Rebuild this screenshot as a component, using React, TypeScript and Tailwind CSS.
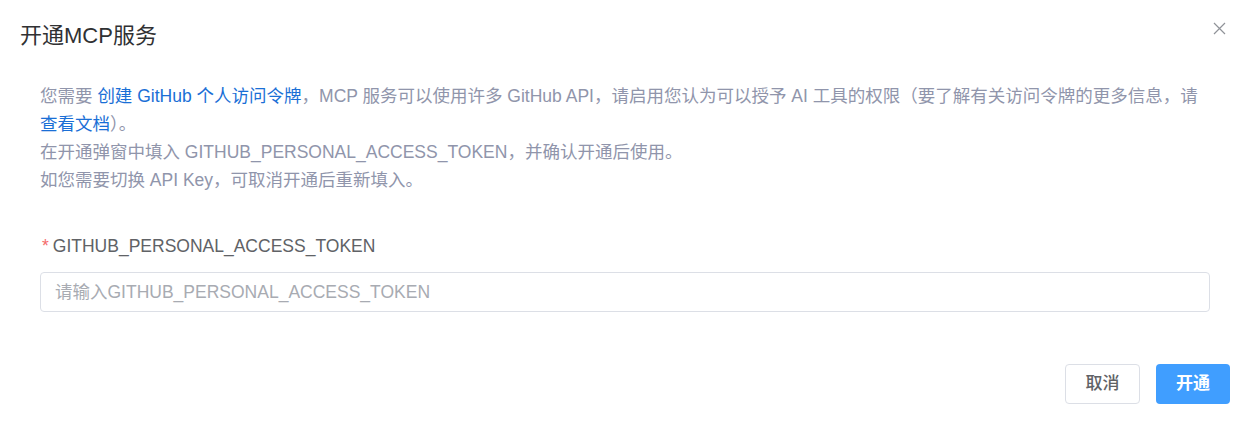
const font = { fontFamily: '"Liberation Sans", "Noto Sans CJK SC", sans-serif' };

function CloseIcon() {
  return (
    <svg width="13" height="13" viewBox="0 0 13 13" className="text-[#909399]">
      <path d="M1 1 L12 12 M12 1 L1 12" stroke="currentColor" strokeWidth="1.2" fill="none" />
    </svg>
  );
}

export default function App() {
  return (
    <div style={font} className="w-[1249px] h-[421px] bg-white rounded-md overflow-hidden flex flex-col">
      <div className="flex justify-between items-start pt-[22px] pl-5 pr-[23px]">
        <p className="text-[22px] leading-7 text-[#303133]">开通MCP服务</p>
        <button className="p-0">
          <CloseIcon />
        </button>
      </div>

      <div className="px-10 pt-8 text-[17.5px] leading-7 text-[#9095ab]">
        <p>
          您需要 <span className="text-[#1a6fd6]">创建 GitHub 个人访问令牌</span>，MCP 服务可以使用许多 GitHub API，请启用您认为可以授予 AI 工具的权限（要了解有关访问令牌的更多信息，请
          <span className="text-[#1a6fd6]">查看文档</span>）。
        </p>
        <p>在开通弹窗中填入 GITHUB_PERSONAL_ACCESS_TOKEN，并确认开通后使用。</p>
        <p>如您需要切换 API Key，可取消开通后重新填入。</p>
      </div>

      <div className="pl-10 pr-[39px] pt-[38px]">
        <p className="text-[17.5px] leading-7 text-[#606266]">
          <span className="text-[#f56c6c] pl-[2px] pr-[4px]">*</span>GITHUB_PERSONAL_ACCESS_TOKEN
        </p>
        <div className="mt-3 h-10 border border-[#dcdfe6] rounded flex items-center px-[14px]">
          <span className="text-[17.5px] text-[#a8abb2]">请输入GITHUB_PERSONAL_ACCESS_TOKEN</span>
        </div>
      </div>

      <div className="flex justify-end gap-4 pl-5 pr-[19px] pt-[52px]">
        <button className="h-10 w-[75px] border border-[#dcdfe6] rounded text-[17px] text-[#606266] font-medium bg-white">
          取消
        </button>
        <button className="h-10 w-[74px] rounded text-[17px] text-white font-bold bg-[#409eff]">
          开通
        </button>
      </div>
    </div>
  );
}
